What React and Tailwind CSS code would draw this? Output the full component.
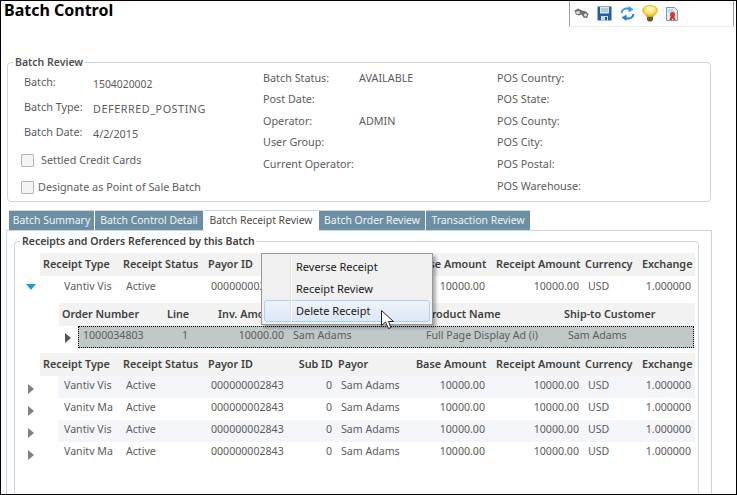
const font = "font-['Open_Sans','Noto_Sans',sans-serif]";

const mainCols = 'grid grid-cols-[83px_85px_89px_39px_78px_74px_95px_57px_55px]';
const mainHeaders = [
  ['Receipt Type', 'pl-[3px]'],
  ['Receipt Status', ''],
  ['Payor ID', ''],
  ['Sub ID', 'text-right pr-[3px]'],
  ['Payor', 'pl-[2px]'],
  ['Base Amount', 'pl-[2px]'],
  ['Receipt Amount', 'pl-[8px]'],
  ['Currency', 'pl-[2px]'],
  ['Exchange', 'pl-[2px]'],
];

function Triangle({ color = '#808080' }) {
  return (
    <svg width="6" height="10" viewBox="0 0 6 10" aria-hidden="true">
      <path d="M0 0L6 5L0 10Z" fill={color} />
    </svg>
  );
}

function MainHeader() {
  return (
    <div className={`${mainCols} h-[23px] items-center bg-[#f2f2f2] text-[10.8px] font-semibold text-[#404040]`}>
      {mainHeaders.map(([t, c]) => (
        <div key={t} className={`${c} whitespace-nowrap`}>{t}</div>
      ))}
    </div>
  );
}

function MainRow({ type, shaded, first }) {
  return (
    <div className={`flex items-center text-[10.6px] ${first ? 'h-[27px] pb-[6px]' : 'h-[22px] pb-[3px]'} ${shaded ? 'bg-[linear-gradient(to_right,transparent_18px,#f4f5f9_18px)]' : ''}`}>
      <div className={`${mainCols} w-full items-center text-[#5c5c5c]`}>
        <div className="pl-[24px] whitespace-nowrap">{type}</div>
        <div className="pl-[3px]">Active</div>
        <div className="pl-[3px]">000000002843</div>
        <div className="text-right pr-[4px]">0</div>
        <div className="pl-[5px] whitespace-nowrap">Sam Adams</div>
        <div className="text-right pr-[3px]">10000.00</div>
        <div className="text-right pr-[4px]">10000.00</div>
        <div className="pl-[5px]">USD</div>
        <div className="text-right pr-[4px]">1.000000</div>
      </div>
    </div>
  );
}

function Field({ label, value, valueCls = '' }) {
  return (
    <div className="flex h-[25px] items-center">
      <span className="w-[69px] shrink-0">{label}</span>
      <span className={`relative top-[2px] ${valueCls}`}>{value}</span>
    </div>
  );
}

function Icons() {
  return (
    <div className="flex h-full items-center pl-[4px]">
      {/* binoculars */}
      <svg width="15" height="11" viewBox="0 0 15 11" className="mr-[8px]" aria-hidden="true">
        <path d="M0.5 2.5L4 0.5L8 2.5L12 3.5L14.5 6L13 10L9.5 9.5L7.5 6.5L5 7.5L2 6.5Z" fill="#6e6e6e" />
        <ellipse cx="4" cy="4.5" rx="2" ry="1.6" fill="#d8dcdf" />
        <ellipse cx="11.5" cy="7" rx="2.2" ry="2" fill="#c4d8ea" stroke="#555555" strokeWidth="0.7" />
      </svg>
      {/* floppy */}
      <svg width="15" height="15" viewBox="0 0 15 15" className="mr-[8px]" aria-hidden="true">
        <path d="M0.5 0.5H14.5V14.5H0.5Z" fill="#1f5fae" />
        <rect x="3" y="1" width="9" height="6.5" fill="#dfe8f2" />
        <path d="M4 3H11M4 5H11" stroke="#8fa6c2" />
        <rect x="4" y="10" width="7" height="4.5" fill="#cfd9e6" />
        <rect x="8" y="11" width="2" height="3" fill="#1f4f8e" />
      </svg>
      {/* refresh */}
      <svg width="15" height="15" viewBox="0 0 15 15" className="mr-[7px]" fill="none" aria-hidden="true">
        <path d="M1.5 7C2 3.5 5 2 8 2.5L10 3.5" stroke="#3a9ae6" strokeWidth="2" />
        <path d="M8.5 0L13.5 3.5L8.5 6.5Z" fill="#3a9ae6" />
        <path d="M13.5 8C13 11.5 10 13 7 12.5L5 11.5" stroke="#2b7ed0" strokeWidth="2" />
        <path d="M6.5 8.5L1.5 11.5L6.5 15Z" fill="#2b7ed0" />
      </svg>
      {/* bulb */}
      <svg width="16" height="17" viewBox="0 0 16 17" className="mr-[8px]" aria-hidden="true">
        <defs>
          <radialGradient id="b" cx="50%" cy="35%" r="60%">
            <stop offset="0%" stopColor="#fffde0" />
            <stop offset="55%" stopColor="#ffe866" />
            <stop offset="100%" stopColor="#e6a800" />
          </radialGradient>
        </defs>
        <path d="M8 0.5C12.5 0.5 15.5 2.8 15.5 5.5C15.5 8 12 9.5 11 12H5C4 9.5 0.5 8 0.5 5.5C0.5 2.8 3.5 0.5 8 0.5Z" fill="url(#b)" stroke="#d49c10" strokeWidth="0.6" />
        <path d="M5 12H11V15L9.5 16.5H6.5L5 15Z" fill="#6f5a3a" />
      </svg>
      {/* document with ribbon */}
      <svg width="12" height="14" viewBox="0 0 12 14" aria-hidden="true">
        <path d="M0.5 0.5H8.5L11.5 3.5V13.5H0.5Z" fill="#e6eef7" stroke="#7f94ad" />
        <path d="M2 3H7M2 5H9" stroke="#a9bbcf" />
        <circle cx="6.5" cy="7.5" r="2.5" fill="#e8341c" />
        <path d="M5 9L3.5 13H5.5L6.5 11L7.5 13H9.5L8 9Z" fill="#d92a12" />
      </svg>
    </div>
  );
}

export default function App() {
  return (
    <div className={`${font} relative flex h-[495px] w-[737px] flex-col overflow-hidden border border-black bg-white text-[10.8px] text-[#5c5c5c]`}>
      {/* title and toolbar */}
      <div className="flex h-[53px] shrink-0 items-start">
        <h1 className="pl-[3px] font-['Liberation_Sans',sans-serif] text-[16px] leading-[19px] font-bold text-black">Batch Control</h1>
        <div className="ml-auto mr-[2px] h-[26px] w-[165px] border-x border-b border-x-[#a0a0a0] border-b-[#ececec]">
          <Icons />
        </div>
      </div>

      {/* batch review */}
      <fieldset className="ml-[6px] h-[148px] w-[704px] shrink-0 rounded-[4px] border border-[#c9d6df] pl-[16px]">
        <legend className="-ml-[11px] px-[2px] text-[10.5px] leading-[16px] font-semibold text-[#505050]">Batch Review</legend>
        <div className="grid grid-cols-[239px_234px_1fr]">
          <div>
            <Field label="Batch:" value="1504020002" valueCls="text-[10.4px]" />
            <Field label="Batch Type:" value="DEFERRED_POSTING" valueCls="tracking-[0.55px]" />
            <Field label="Batch Date:" value="4/2/2015" />
            <label className="mt-[2px] flex h-[27px] items-center">
              <span className="-ml-[3px] h-[13px] w-[13px] rounded-[1px] border border-[#b5b5b5] bg-[#f4f4f4]" />
              <span className="ml-[7px]">Settled Credit Cards</span>
            </label>
            <label className="flex h-[27px] items-center">
              <span className="-ml-[3px] h-[13px] w-[13px] rounded-[1px] border border-[#b5b5b5] bg-[#f4f4f4]" />
              <span className="ml-[4px]">Designate as Point of Sale Batch</span>
            </label>
          </div>
          <div className="-mt-[3px] flex flex-col">
            {[['Batch Status:', 'AVAILABLE'], ['Post Date:', ''], ['Operator:', 'ADMIN'], ['User Group:', ''], ['Current Operator:', '']].map(([l, v]) => (
              <div key={l} className="flex h-[21.6px] items-center">
                <span className="w-[96px] shrink-0 whitespace-nowrap">{l}</span>
                <span>{v}</span>
              </div>
            ))}
          </div>
          <div className="-mt-[3px] flex flex-col">
            {['POS Country:', 'POS State:', 'POS County:', 'POS City:', 'POS Postal:', 'POS Warehouse:'].map((l) => (
              <div key={l} className="flex h-[21.6px] items-center">{l}</div>
            ))}
          </div>
        </div>
      </fieldset>

      {/* tabs */}
      <div className="mt-[8px] flex h-[20px] shrink-0 pl-[8px] text-[10.4px]">
        {[
          ['Batch Summary', 'w-[86px]'],
          ['Batch Control Detail', 'w-[109px]'],
          ['Batch Receipt Review', 'w-[115px]', true],
          ['Batch Order Review', 'w-[107px]'],
          ['Transaction Review', 'w-[105px]'],
        ].map(([t, w, active]) => (
          <div
            key={t}
            className={`${w} flex items-center justify-center whitespace-nowrap border-r border-r-white border-t border-t-[#c9d6df] ${active ? 'relative z-10 h-[21px] bg-white text-[#4a4a4a]' : 'h-[20px] bg-[#6d8fa3] text-[#eef3f6]'}`}
          >
            {t}
          </div>
        ))}
      </div>

      {/* panel */}
      <div className="ml-[5px] w-[706px] flex-1 overflow-hidden border-x border-t border-[#c9d6df] pl-[7px]">
        <fieldset className="h-[300px] w-[685px] rounded-[4px] border border-[#c9d6df] pl-[11px]">
          <legend className="-ml-[6px] px-[2px] text-[10.5px] leading-[20px] font-semibold text-[#404040]">Receipts and Orders Referenced by this Batch</legend>
          <div className="flex pt-[2px]">
            <div className="flex w-[14px] shrink-0 flex-col">
              <div className="h-[23px]" />
              <div className="flex h-[27px] items-center pb-[5px]">
                <svg width="10" height="6" viewBox="0 0 10 6" aria-hidden="true"><path d="M0 0H10L5 6Z" fill="#17a0d8" /></svg>
              </div>
              <div className="h-[73px]" />
              {[0, 1, 2, 3].map((i) => (
                <div key={i} className="flex h-[22px] items-center pl-[2px] pt-[3px]"><Triangle /></div>
              ))}
            </div>
            <div className="w-[655px] shrink-0">
              <MainHeader />
              <MainRow type="Vantiv Vis" first />

              <div className="ml-[19px]">
                <div className="grid h-[23px] grid-cols-[106px_50px_73px_134px_139px_134px] items-center bg-[#f2f2f2] text-[10.8px] font-semibold text-[#404040]">
                  <div className="pl-[3px]">Order Number</div>
                  <div className="pl-[2px]">Line</div>
                  <div className="pl-[3px] whitespace-nowrap">Inv. Amount</div>
                  <div />
                  <div className="pl-[3px]">Product Name</div>
                  <div className="pl-[3px]">Ship-to Customer</div>
                </div>
                <div className="flex h-[22px] items-center">
                  <div className="w-[19px] shrink-0 pl-[6px] pt-[2px]"><Triangle color="#555555" /></div>
                  <div className="grid h-full w-[616px] grid-cols-[100px_37px_71px_136px_142px_1fr] items-center border border-dotted border-black bg-[#c0c8c8] pb-[3px] text-[10.6px] text-[#5c5c5c]">
                    <div className="pl-[4px]">1000034803</div>
                    <div className="pl-[3px]">1</div>
                    <div className="text-right pr-[3px]">10000.00</div>
                    <div className="pl-[6px]">Sam Adams</div>
                    <div className="pl-[3px] whitespace-nowrap">Full Page Display Ad (i)</div>
                    <div className="pl-[3px]">Sam Adams</div>
                  </div>
                </div>
              </div>

              <div className="mt-[5px]"><MainHeader /></div>
              <MainRow type="Vantiv Vis" shaded />
              <MainRow type="Vanitv Ma" />
              <MainRow type="Vantiv Vis" shaded />
              <MainRow type="Vanitv Ma" />
            </div>
          </div>
        </fieldset>
      </div>

      {/* context menu */}
      <div className="absolute left-[260px] top-[252px] z-20 h-[72px] w-[172px] border border-[#979797] bg-[#f0f0f0] p-[2px] text-[11px] text-[#1a1a1a] shadow-[3px_3px_3px_rgba(0,0,0,0.3)]">
        <div className="absolute bottom-[2px] left-[28px] top-[2px] w-[2px] border-l border-r border-l-[#e0e0e0] border-r-white" />
        <div className="flex h-[22px] items-center pl-[32px]">Reverse Receipt</div>
        <div className="flex h-[22px] items-center pl-[32px]">Receipt Review</div>
        <div className="flex h-[22px] items-center rounded-[3px] border border-[#aecff0] bg-[linear-gradient(#eef3fa,#dbe8f6)] pl-[31px]">Delete Receipt</div>
      </div>

      {/* mouse pointer */}
      <svg width="16" height="21" viewBox="0 0 16 21" className="absolute left-[379px] top-[308px] z-30" aria-hidden="true">
        <path d="M1.5 1.5V16.5L5.5 13L8.5 19.5L11 18.5L8.5 12.5H13.5Z" fill="#ffffff" stroke="#222222" strokeWidth="1" strokeLinejoin="round" />
      </svg>
    </div>
  );
}
